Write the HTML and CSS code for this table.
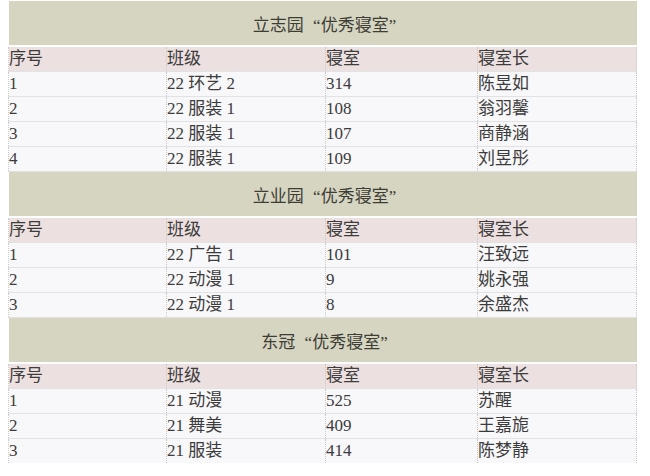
FILE: index.html
```html
<!DOCTYPE html>
<html lang="zh">
<head>
<meta charset="utf-8">
<link rel="stylesheet" href="styles.css">
</head>
<body>
<table class="dorm">
  <colgroup>
    <col class="c1"><col class="c2"><col class="c3"><col class="c4">
  </colgroup>
  <tbody>
    <tr class="title"><td colspan="4">立志园 “优秀寝室”</td></tr>
    <tr class="head"><td>序号</td><td>班级</td><td>寝室</td><td>寝室长</td></tr>
    <tr class="row"><td>1</td><td>22 环艺 2</td><td>314</td><td>陈昱如</td></tr>
    <tr class="row"><td>2</td><td>22 服装 1</td><td>108</td><td>翁羽馨</td></tr>
    <tr class="row"><td>3</td><td>22 服装 1</td><td>107</td><td>商静涵</td></tr>
    <tr class="row"><td>4</td><td>22 服装 1</td><td>109</td><td>刘昱彤</td></tr>
    <tr class="title"><td colspan="4">立业园 “优秀寝室”</td></tr>
    <tr class="head"><td>序号</td><td>班级</td><td>寝室</td><td>寝室长</td></tr>
    <tr class="row"><td>1</td><td>22 广告 1</td><td>101</td><td>汪致远</td></tr>
    <tr class="row"><td>2</td><td>22 动漫 1</td><td>9</td><td>姚永强</td></tr>
    <tr class="row"><td>3</td><td>22 动漫 1</td><td>8</td><td>余盛杰</td></tr>
    <tr class="title"><td colspan="4">东冠 “优秀寝室”</td></tr>
    <tr class="head"><td>序号</td><td>班级</td><td>寝室</td><td>寝室长</td></tr>
    <tr class="row"><td>1</td><td>21 动漫</td><td>525</td><td>苏醒</td></tr>
    <tr class="row"><td>2</td><td>21 舞美</td><td>409</td><td>王嘉旎</td></tr>
    <tr class="row"><td>3</td><td>21 服装</td><td>414</td><td>陈梦静</td></tr>
  </tbody>
</table>
</body>
</html>
```

FILE: styles.css
```css
html, body {
  margin: 0;
  padding: 0;
  background: #ffffff;
}
body {
  font-family: "Liberation Serif", "Noto Sans CJK SC", serif;
  color: #3c3c3c;
}
.dorm {
  margin: 1px 0 0 8px;
  width: 628px;
  border-collapse: collapse;
  table-layout: fixed;
  font-size: 17px;
}
.c1 { width: 158px; }
.c2 { width: 159px; }
.c3 { width: 152px; }
.c4 { width: 159px; }
.dorm td {
  padding: 0;
  white-space: nowrap;
  border-left: 1px dotted #c9c9c9;
  border-right: 1px dotted #c9c9c9;
}
.title td {
  background: #d6d5c1;
  height: 44px;
  text-align: center;
  font-size: 17px;
  word-spacing: 5px;
  color: #3d3d36;
  border-bottom: 2px solid #ffffff;
  border-left: none;
  border-right: none;
  padding: 0 0 0 4px;
}
.head td {
  background: #ede0e0;
  height: 24px;
  line-height: 24px;
}
.row td {
  background: #f8f7fa;
  height: 24px;
  line-height: 24px;
  border-top: 1px solid #e2e2e4;
}
.row + .title td {
  border-top: 1px solid #e2e2e4;
}
```
